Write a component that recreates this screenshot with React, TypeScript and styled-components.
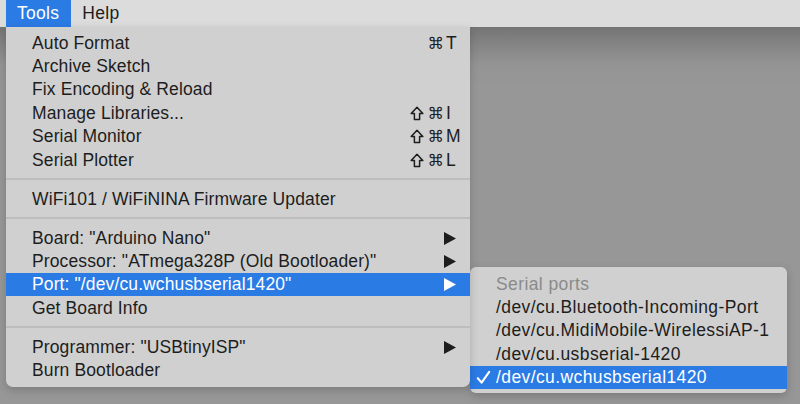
import React from "react";
import styled, { createGlobalStyle } from "styled-components";

const GlobalStyle = createGlobalStyle`
  html, body {
    margin: 0;
    padding: 0;
    width: 800px;
    height: 404px;
    overflow: hidden;
  }
  body {
    font-family: "Liberation Sans", Arial, "DejaVu Sans", sans-serif;
  }
`;

type Entry =
  | {
      kind: "item";
      label: string;
      shift?: boolean;
      keyChar?: string;
      submenu?: boolean;
      active?: boolean;
    }
  | { kind: "sep" };

const toolsMenu: Entry[] = [
  { kind: "item", label: "Auto Format", keyChar: "T" },
  { kind: "item", label: "Archive Sketch" },
  { kind: "item", label: "Fix Encoding & Reload" },
  { kind: "item", label: "Manage Libraries...", shift: true, keyChar: "I" },
  { kind: "item", label: "Serial Monitor", shift: true, keyChar: "M" },
  { kind: "item", label: "Serial Plotter", shift: true, keyChar: "L" },
  { kind: "sep" },
  { kind: "item", label: "WiFi101 / WiFiNINA Firmware Updater" },
  { kind: "sep" },
  { kind: "item", label: 'Board: "Arduino Nano"', submenu: true },
  { kind: "item", label: 'Processor: "ATmega328P (Old Bootloader)"', submenu: true },
  { kind: "item", label: 'Port: "/dev/cu.wchusbserial1420"', submenu: true, active: true },
  { kind: "item", label: "Get Board Info" },
  { kind: "sep" },
  { kind: "item", label: 'Programmer: "USBtinyISP"', submenu: true },
  { kind: "item", label: "Burn Bootloader" },
];

const ports = [
  "/dev/cu.Bluetooth-Incoming-Port",
  "/dev/cu.MidiMobile-WirelessiAP-1",
  "/dev/cu.usbserial-1420",
  "/dev/cu.wchusbserial1420",
];
const selectedPort = "/dev/cu.wchusbserial1420";

const Arrow: React.FC = () => (
  <svg width="12" height="13" viewBox="0 0 12 13">
    <path d="M0 0 L12 6.5 L0 13 Z" fill="currentColor" />
  </svg>
);

const ShiftIcon: React.FC = () => (
  <svg width="14" height="15" viewBox="0 0 14 15">
    <path
      d="M7 1.2 L12.8 7.6 H9.6 V13.6 H4.4 V7.6 H1.2 Z"
      fill="none"
      stroke="currentColor"
      strokeWidth="1.5"
      strokeLinejoin="round"
    />
  </svg>
);

const CheckIcon: React.FC = () => (
  <svg width="15" height="15" viewBox="0 0 15 15">
    <path
      d="M1.8 8.2 L5.6 12.6 L13.2 1.8"
      fill="none"
      stroke="currentColor"
      strokeWidth="2.1"
      strokeLinecap="round"
      strokeLinejoin="round"
    />
  </svg>
);

const App: React.FC = () => (
  <Screen>
    <GlobalStyle />
    <MenuBar>
      <BarItem active>Tools</BarItem>
      <BarItem>Help</BarItem>
    </MenuBar>

    <Desktop>
      <Menu>
        {toolsMenu.map((e, i) =>
          e.kind === "sep" ? (
            <Separator key={i} />
          ) : (
            <Row key={i} active={e.active}>
              <Label>{e.label}</Label>
              {e.keyChar && (
                <Shortcut>
                  {e.shift && <ShiftIcon />}
                  <Cmd>⌘</Cmd>
                  <KeyChar>{e.keyChar}</KeyChar>
                </Shortcut>
              )}
              {e.submenu && (
                <ArrowSlot>
                  <Arrow />
                </ArrowSlot>
              )}
            </Row>
          )
        )}
      </Menu>

      <Submenu>
        <SubHeader>Serial ports</SubHeader>
        {ports.map((p) => (
          <SubRow key={p} active={p === selectedPort}>
            <Check>{p === selectedPort && <CheckIcon />}</Check>
            {p}
          </SubRow>
        ))}
      </Submenu>
    </Desktop>
  </Screen>
);

const Screen = styled.div`
  width: 800px;
  height: 404px;
  display: flex;
  flex-direction: column;
  background: #979797;
`;

const MenuBar = styled.div`
  height: 27px;
  display: flex;
  align-items: stretch;
  padding-left: 6px;
  background: #dcdcdc;
  font-size: 17.5px;
  letter-spacing: 0.3px;
  color: #1d1d1d;
`;

const BarItem = styled.div<{ active?: boolean }>`
  display: flex;
  align-items: center;
  padding: 0 12px 0 11px;
  background: ${({ active }) => (active ? "#2b7be5" : "transparent")};
  color: ${({ active }) => (active ? "#ffffff" : "#1d1d1d")};
`;

const Desktop = styled.div`
  flex: 1;
  display: flex;
  align-items: flex-start;
  padding-left: 6px;
  background: linear-gradient(
    to bottom,
    #747474 0px,
    #858585 18px,
    #949494 38px,
    #979797 60px
  );
`;

const Menu = styled.div`
  width: 464px;
  padding: 4px 0 5px;
  background: #d0d0d0;
  border-radius: 0 0 7px 7px;
  box-shadow: 0 3px 10px rgba(0, 0, 0, 0.18);
  font-size: 17.5px;
  letter-spacing: 0.12px;
  color: #1d1d1d;
  position: relative;
  z-index: 1;
`;

const Row = styled.div<{ active?: boolean }>`
  height: 23.4px;
  display: flex;
  align-items: center;
  padding: 1px 11px 0 26px;
  box-sizing: border-box;
  background: ${({ active }) => (active ? "#2b7be5" : "transparent")};
  color: ${({ active }) => (active ? "#ffffff" : "#1d1d1d")};
  white-space: nowrap;
`;

const Label = styled.span`
  flex: 1;
`;

const Shortcut = styled.span`
  display: flex;
  align-items: center;
  gap: 3px;
`;

const Cmd = styled.span`
  font-family: "DejaVu Sans", sans-serif;
  font-size: 16.5px;
  margin-right: -1px;
`;

const KeyChar = styled.span`
  width: 13px;
  letter-spacing: 0;
`;

const ArrowSlot = styled.span`
  display: flex;
  align-items: center;
  margin-right: 3px;
`;

const Separator = styled.div`
  height: 2px;
  margin: 6.8px 0;
  background: #bdbdbd;
`;

const Submenu = styled.div`
  width: 317px;
  margin-top: 240px;
  padding: 5px 0 4px;
  background: #d0d0d0;
  border-radius: 6px;
  box-shadow: 0 3px 10px rgba(0, 0, 0, 0.2);
  font-size: 17.5px;
  letter-spacing: 0.4px;
  color: #1d1d1d;
`;

const SubHeader = styled.div`
  height: 23.4px;
  display: flex;
  align-items: center;
  padding: 1px 0 0 26px;
  box-sizing: border-box;
  color: #8a8a8a;
`;

const SubRow = styled.div<{ active?: boolean }>`
  height: 23.4px;
  display: flex;
  align-items: center;
  padding-top: 1px;
  box-sizing: border-box;
  background: ${({ active }) => (active ? "#2b7be5" : "transparent")};
  color: ${({ active }) => (active ? "#ffffff" : "#1d1d1d")};
  white-space: nowrap;
`;

const Check = styled.span`
  width: 26px;
  padding-left: 6px;
  box-sizing: border-box;
  display: flex;
  align-items: center;
`;

export default App;
